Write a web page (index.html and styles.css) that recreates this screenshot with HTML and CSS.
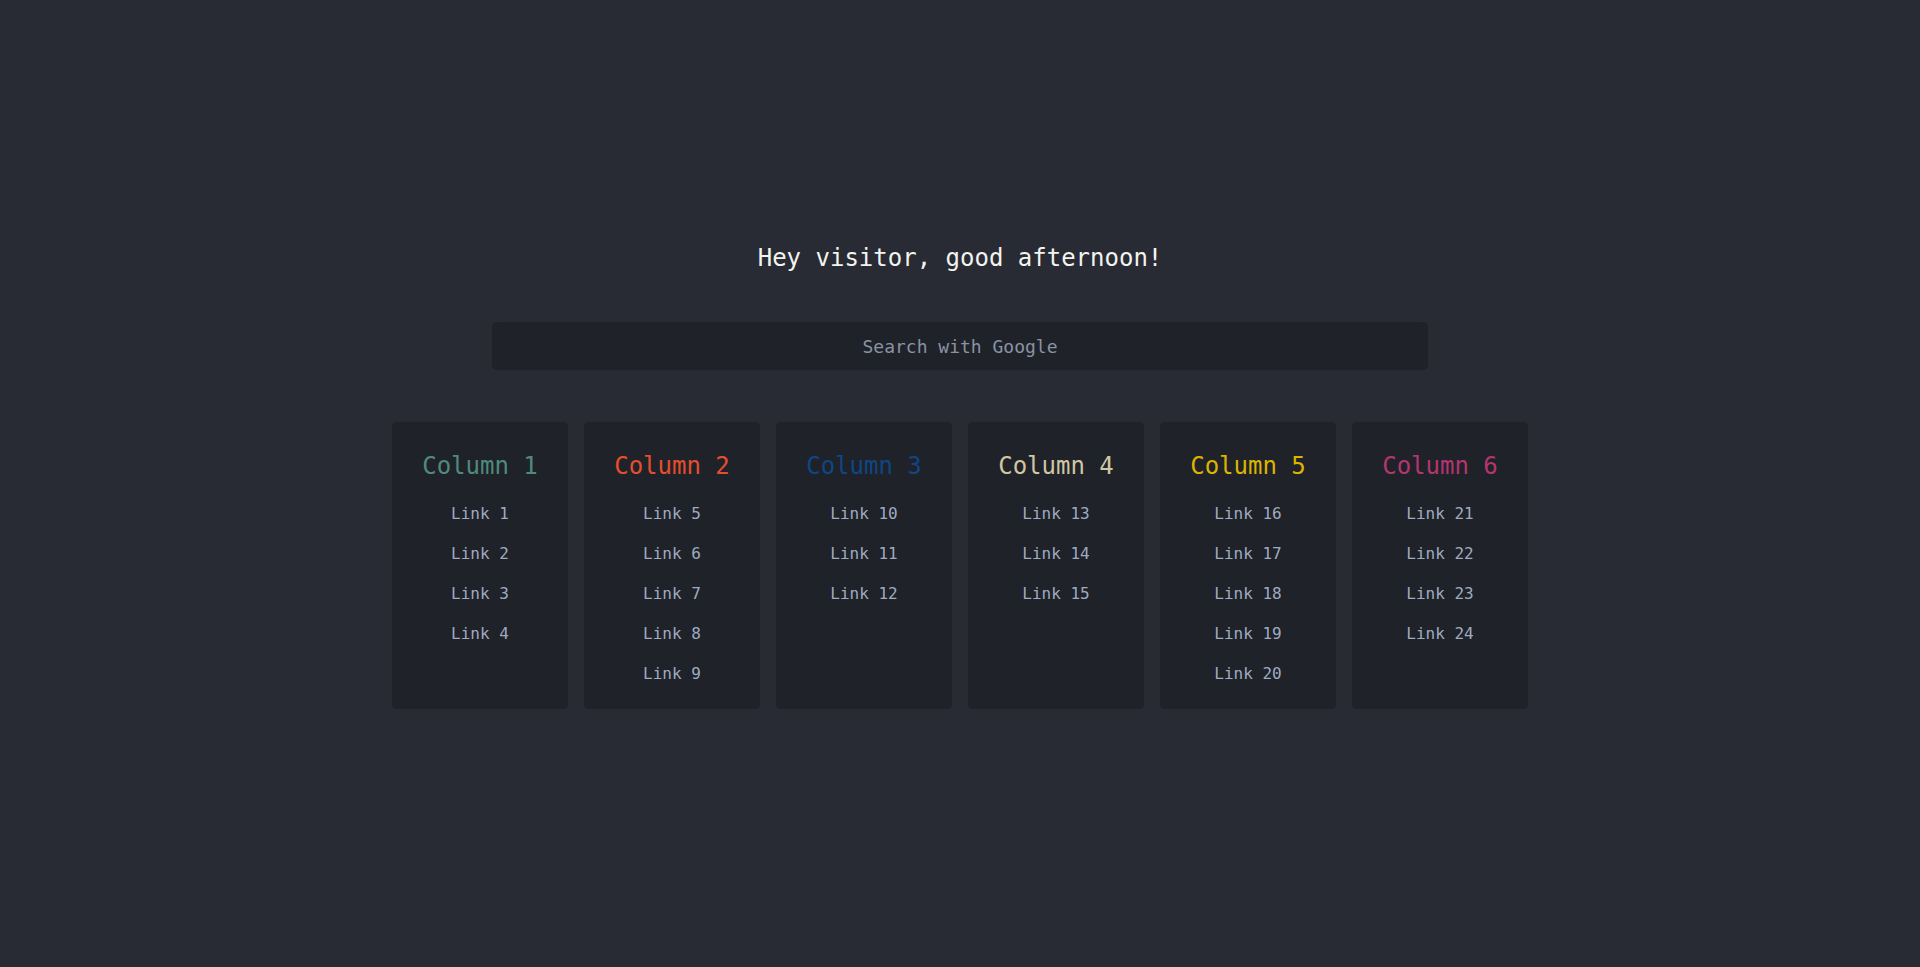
FILE: index.html
```html
<!DOCTYPE html>
<html lang="en">
<head>
<meta charset="utf-8">
<title>Start</title>
<link rel="stylesheet" href="styles.css">
</head>
<body>
<main class="page">
  <h1 class="greeting">Hey visitor, good afternoon!</h1>
  <form class="search">
    <input class="search-input" type="text" placeholder="Search with Google">
  </form>
  <section class="columns">
    <div class="card">
      <h2 class="card-title c1">Column 1</h2>
      <ul class="links">
        <li><a href="#">Link 1</a></li>
        <li><a href="#">Link 2</a></li>
        <li><a href="#">Link 3</a></li>
        <li><a href="#">Link 4</a></li>
      </ul>
    </div>
    <div class="card">
      <h2 class="card-title c2">Column 2</h2>
      <ul class="links">
        <li><a href="#">Link 5</a></li>
        <li><a href="#">Link 6</a></li>
        <li><a href="#">Link 7</a></li>
        <li><a href="#">Link 8</a></li>
        <li><a href="#">Link 9</a></li>
      </ul>
    </div>
    <div class="card">
      <h2 class="card-title c3">Column 3</h2>
      <ul class="links">
        <li><a href="#">Link 10</a></li>
        <li><a href="#">Link 11</a></li>
        <li><a href="#">Link 12</a></li>
      </ul>
    </div>
    <div class="card">
      <h2 class="card-title c4">Column 4</h2>
      <ul class="links">
        <li><a href="#">Link 13</a></li>
        <li><a href="#">Link 14</a></li>
        <li><a href="#">Link 15</a></li>
      </ul>
    </div>
    <div class="card">
      <h2 class="card-title c5">Column 5</h2>
      <ul class="links">
        <li><a href="#">Link 16</a></li>
        <li><a href="#">Link 17</a></li>
        <li><a href="#">Link 18</a></li>
        <li><a href="#">Link 19</a></li>
        <li><a href="#">Link 20</a></li>
      </ul>
    </div>
    <div class="card">
      <h2 class="card-title c6">Column 6</h2>
      <ul class="links">
        <li><a href="#">Link 21</a></li>
        <li><a href="#">Link 22</a></li>
        <li><a href="#">Link 23</a></li>
        <li><a href="#">Link 24</a></li>
      </ul>
    </div>
  </section>
</main>
</body>
</html>
```
FILE: styles.css
```css
html, body {
  margin: 0;
  padding: 0;
  background: #282b33;
  height: 100%;
}
body {
  font-family: "DejaVu Sans Mono", "Liberation Mono", monospace;
  color: #9fabc0;
}
.page {
  display: flex;
  flex-direction: column;
  align-items: center;
  padding-top: 242px;
  box-sizing: border-box;
}
.greeting {
  margin: 0;
  font-size: 24px;
  line-height: 32px;
  font-weight: normal;
  color: #f3f3f0;
}
.search {
  margin: 48px 0 0 0;
  width: 936px;
}
.search-input {
  display: block;
  width: 100%;
  height: 48px;
  box-sizing: border-box;
  border: none;
  outline: none;
  border-radius: 5px;
  background: #1f2229;
  font-family: inherit;
  font-size: 18px;
  text-align: center;
  color: #c8ccd4;
  padding: 0;
}
.search-input::placeholder {
  color: #8a93a3;
}
.columns {
  display: flex;
  gap: 16px;
  margin-top: 52px;
}
.card {
  width: 176px;
  box-sizing: border-box;
  background: #1f2229;
  border-radius: 5px;
  padding: 28px 0 15px;
  text-align: center;
}
.card-title {
  margin: 0 0 12px;
  font-size: 24px;
  line-height: 32px;
  font-weight: normal;
}
.c1 { color: #4f8b7b; }
.c2 { color: #e34f2e; }
.c3 { color: #0f4684; }
.c4 { color: #cfc7a2; }
.c5 { color: #dcb400; }
.c6 { color: #b5356f; }
.links {
  list-style: none;
  margin: 0;
  padding: 0;
}
.links li {
  line-height: 40px;
  font-size: 16px;
}
.links a {
  color: #9fabc0;
  text-decoration: none;
}
```
